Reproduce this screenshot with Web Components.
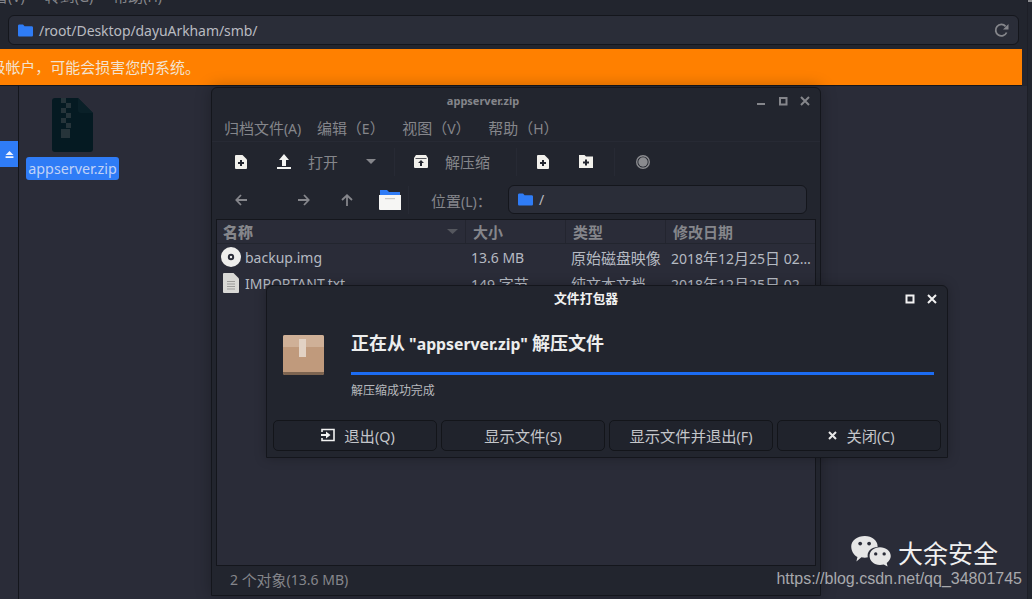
<!DOCTYPE html>
<html lang="zh">
<head>
<meta charset="utf-8">
<title>appserver.zip</title>
<style>
  html, body { margin: 0; height: 100%; overflow: hidden; background: #2a2c38; }
  body { font: 14px "Noto Sans", "Noto Sans CJK SC", sans-serif; color: #b8bac0; }
</style>
</head>
<body>
<file-manager></file-manager>
<archive-window></archive-window>
<extract-dialog></extract-dialog>
<blog-mark></blog-mark>

<script>
const ICONS = {
  folder: `<svg width="15" height="13" viewBox="0 0 16 13"><path fill="#2f7cf6" d="M0 1.500C0 .7.6 0 1.400 0h4l1.600 2h7.600c.8 0 1.400.6 1.400 1.400v8.200c0 .8-.6 1.400-1.400 1.400H1.400C.6 13 0 12.400 0 11.600z"/></svg>`,
  newFile: `<svg width="12" height="14" viewBox="0 0 12 14"><path fill="#f2f1ec" d="M1 0h6.500L12 4.500V13a1 1 0 0 1-1 1H1a1 1 0 0 1-1-1V1a1 1 0 0 1 1-1z"/><path fill="#22252e" d="M5 5h2v2h2v2H7v2H5V9H3V7h2z"/></svg>`,
  newFolder: `<svg width="14" height="13" viewBox="0 0 14 13"><path fill="#f2f1ec" d="M0 0h5.500l1.500 1.500h7V13H0z"/><path fill="#22252e" d="M6 4.500h2v2h2v2H8v2H6v-2H4v-2h2z"/></svg>`,
  upload: `<svg width="14" height="15" viewBox="0 0 14 15"><path fill="#f4f4f2" d="M7 0l5 6H9v6H5V6H2zM0 13h14v2H0z"/></svg>`,
  extract: `<svg width="14" height="13" viewBox="0 0 14 13"><path fill="#f2f1ec" d="M2 0h10l2 3v9a1 1 0 0 1-1 1H1a1 1 0 0 1-1-1V3z"/><path fill="#22252e" d="M1.500 3h11v.800h-11zM7 5l3 3H8v3H6V8H4z"/></svg>`,
  stop: `<svg width="14" height="14" viewBox="0 0 14 14"><circle cx="7" cy="7" r="6.300" fill="none" stroke="#8a8b8f" stroke-width="1.400"/><circle cx="7" cy="7" r="4.700" fill="#8a8b8f"/></svg>`,
  caret: `<svg width="10" height="5" viewBox="0 0 10 5"><path fill="#85868b" d="M0 0h10L5 5z"/></svg>`,
  caretDim: `<svg width="11" height="5" viewBox="0 0 11 5"><path fill="#55575e" d="M0 0h11L5.500 5z"/></svg>`,
  back: `<svg width="12" height="12" viewBox="0 0 12 12"><path fill="none" stroke="#85868b" stroke-width="1.800" d="M6 1L1.300 6 6 11M1.500 6H12"/></svg>`,
  forward: `<svg width="12" height="12" viewBox="0 0 12 12"><path fill="none" stroke="#85868b" stroke-width="1.800" d="M6 1l4.700 5L6 11M10.500 6H0"/></svg>`,
  up: `<svg width="12" height="12" viewBox="0 0 12 12"><path fill="none" stroke="#85868b" stroke-width="1.800" d="M1 6l5-4.700L11 6M6 1.500V12"/></svg>`,
  openFolder: `<svg width="22" height="20" viewBox="0 0 22 20"><path fill="#2f7cf6" d="M1 0h7l2 2h11v6H1z"/><path fill="#f6f6f4" d="M0 5h22v15H1a1 1 0 0 1-1-1z"/><path fill="#c8c8c6" d="M6 8h10v1.200H6z"/></svg>`,
  disc: `<svg width="20" height="20" viewBox="0 0 20 20"><circle cx="10" cy="10" r="10" fill="#eeeeec"/><circle cx="10" cy="10" r="3.200" fill="#2a2c38"/><circle cx="10" cy="10" r="1.200" fill="#eeeeec"/></svg>`,
  text: `<svg width="16" height="20" viewBox="0 0 16 20"><path fill="#d9d9d6" d="M1 0h9.500L16 5.500V19a1 1 0 0 1-1 1H1a1 1 0 0 1-1-1V1a1 1 0 0 1 1-1z"/><path fill="#9c9c9a" d="M4 8h8v1H4zM4 10.500h8v1H4zM4 13h8v1H4zM4 15.500h8v1H4z"/></svg>`,
  exit: `<svg width="15" height="14" viewBox="0 0 15 14"><path fill="none" stroke="#f2f2f2" stroke-width="1.600" d="M2 4V1.500h12v11H2V10"/><path fill="#f2f2f2" d="M1 6h5V3.500L10.500 7 6 10.500V8H1z"/></svg>`,
  close: `<svg width="9" height="9" viewBox="0 0 9 9"><path fill="none" stroke="#e8e8e8" stroke-width="2" d="M1 1l7 7M8 1L1 8"/></svg>`,
  reload: `<svg width="15" height="15" viewBox="0 0 15 15"><path fill="none" stroke="#85868b" stroke-width="1.800" d="M12.600 9.500A5.700 5.700 0 1 1 11.600 3.300"/><path fill="#85868b" d="M14.500 1v5.500H9z"/></svg>`,
  eject: `<svg width="9" height="7" viewBox="0 0 10 8"><path fill="#eef3ff" d="M5 0l4.500 4.500h-9zM.500 6h9v2h-9z"/></svg>`,
  zip: `<svg width="41" height="54" viewBox="0 0 41 54"><path fill="#051a22" d="M3 0h23l15 15v36a3 3 0 0 1-3 3H3a3 3 0 0 1-3-3V3a3 3 0 0 1 3-3z"/><path fill="#0a2028" d="M26 0l15 15H29a3 3 0 0 1-3-3z"/><path fill="#26343a" d="M9 0h5v5H9zM14 5h5v5h-5zM9 10h5v5H9zM14 15h5v5h-5zM9 20h5v5H9zM14 25h5v5h-5zM9 31h9v9H9z"/></svg>`,
  box: `<svg width="41" height="40" viewBox="0 0 41 40"><rect width="41" height="40" rx="2" fill="#c09a7c"/><path fill="#cfb097" d="M2 0h37a2 2 0 0 1 2 2v10H0V2a2 2 0 0 1 2-2z"/><path fill="#7d6450" d="M0 37h41v1a2 2 0 0 1-2 2H2a2 2 0 0 1-2-2z"/><rect x="16" y="4" width="7" height="18" fill="#e2d2c4"/></svg>`,
  wechat: `<svg width="40" height="32" viewBox="0 0 42 34"><path fill="#e6e6e6" d="M14.500 0C22 0 28 4.700 28 10.800c0 .4 0 .7-.1 1-5.900.2-10.500 4-10.500 9 0 .7.100 1.300.3 1.900-1 .2-2 .3-3.200.3-1.300 0-2.500-.2-3.700-.5L5.500 27l1.100-4.600C2.700 20.300 0 16 0 11 0 4.800 6.500 0 14.500 0z"/><path fill="#e6e6e6" d="M30.500 12C36.800 12 42 16.200 42 21.300c0 3-1.800 5.500-4.300 7.300l.9 3.900-4-2.200c-1.300.3-2.700.5-4.100.5-6.300 0-11-4.200-11-9.500S24.200 12 30.500 12z"/><circle cx="9.500" cy="8" r="2" fill="#2a2c38"/><circle cx="19" cy="8" r="2" fill="#2a2c38"/><circle cx="26" cy="19" r="1.800" fill="#2a2c38"/><circle cx="35" cy="19" r="1.800" fill="#2a2c38"/></svg>`
}

// the reference sets its Chinese a little larger than its Latin text
function render(el, html) {
  el.attachShadow({ mode: 'open' }).innerHTML =
    '<style>.zh { font-size: 1.07em; }</style>' +
    html.replace(/[\u3000-\u9fff\uff00-\uffef]+/g, '<span class="zh">$&</span>')
}

customElements.define('app-icon', class extends HTMLElement {
  connectedCallback() {
    this.attachShadow({ mode: 'open' }).innerHTML = `
      <style>:host { display: inline-flex; align-items: center; justify-content: center; flex: none; } svg { display: block; }</style>
      ${ICONS[this.getAttribute('name')]}`
  }
})

customElements.define('file-manager', class extends HTMLElement {
  constructor() {
    super()
    render(this, `
      <style>
        :host { display: flex; flex-direction: column; position: absolute; inset: 0; background: #23252f; }
        .menu { height: 7px; overflow: hidden; background: #22252e; color: #85868b; }
        .menu div { display: flex; gap: 20px; margin-top: -14px; line-height: 20px; margin-left: -22px; }
        .tools { height: 42px; background: #22252e; padding: 8px 13px 4px 8px; box-sizing: border-box; }
        .path { height: 30px; box-sizing: border-box; display: flex; align-items: center; gap: 6px; padding: 0 9px; background: #2a2d38; border: 1px solid #14161c; border-radius: 6px; color: #b9bbc1; letter-spacing: -.07px; }
        .path span { flex: 1; }
        .warn { height: 37px; width: 1022px; box-sizing: border-box; padding-bottom: 2px; background: #ff8000; color: #f3e3d0; display: flex; align-items: center; border-bottom: 1px solid #14161c; }
        .warn div { width: 200px; display: flex; justify-content: flex-end; overflow: hidden; white-space: nowrap; }
        .body { flex: 1; display: flex; background: #2a2c38; }
        .side { width: 19px; box-sizing: border-box; border-right: 1px solid #14161c; padding-top: 55px; flex: none; }
        .eject { height: 26px; width: 18px; background: #2f7cf6; display: flex; align-items: center; justify-content: center; }
        .files { padding: 12px 0 0 7px; display: flex; flex-direction: column; align-items: center; width: 93px; }
        .label { margin-top: 5px; background: #2f7cf6; color: #c0d2f6; border-radius: 3px; padding: 0 2px; line-height: 23px; font-size: 14.3px; }
        .gutter { position: absolute; top: 0; right: 0; bottom: 0; width: 5px; box-sizing: border-box; border-left: 1px solid #1d1f27; background: #22252e; }
        .thumb { height: 2px; background: #8a8b8f; }
      </style>
      <div class="menu"><div><span>查看(V)</span><span>转到(G)</span><span>帮助(H)</span></div></div>
      <div class="tools"><div class="path"><app-icon name="folder"></app-icon><span>/root/Desktop/dayuArkham/smb/</span><app-icon name="reload"></app-icon></div></div>
      <div class="warn"><div>您正在使用超级帐户，可能会损害您的系统。</div></div>
      <div class="body">
        <div class="side"><div class="eject"><app-icon name="eject"></app-icon></div></div>
        <div class="files"><app-icon name="zip"></app-icon><div class="label">appserver.zip</div></div>
      </div>
      <div class="gutter"><div class="thumb"></div></div>`)
  }
})

customElements.define('archive-window', class extends HTMLElement {
  constructor() {
    super()
    render(this, `
      <style>
        :host { position: absolute; left: 211px; top: 87px; width: 610px; height: 509px; box-sizing: border-box; border: 1px solid #14161c; border-radius: 6px 6px 0 0; background: #22252e; display: flex; flex-direction: column; box-shadow: 0 0 16px rgba(0,0,0,.28); color: #85868b; }
        .title { height: 26px; flex: none; position: relative; text-align: center; font-size: 11px; font-weight: 700; line-height: 26px; padding-right: 66px; }
        .caps { position: absolute; top: 0; right: 10px; height: 100%; display: flex; align-items: center; gap: 12px; }
        .menu { height: 28px; flex: none; display: flex; align-items: center; gap: 17.700px; padding-left: 12px; border-bottom: 1px solid #272a34; box-sizing: border-box; }
        .menu > span:first-child { margin-right: -2px; }
        .bar { height: 39px; flex: none; display: flex; align-items: center; position: relative; }
        .bar > *, .loc > * { position: absolute; }
        .loc { height: 38px; flex: none; display: flex; align-items: center; position: relative; }
        .entry { left: 296px; top: 4px; width: 299px; height: 29px; box-sizing: border-box; border: 1px solid #14161c; border-radius: 6px; background: #2a2d38; display: flex; align-items: center; gap: 6px; padding: 0 9px; color: #b9bbc1; }
        .sep { width: 1px; height: 28px; background: #272a34; }
        .list { margin: 0 4px; height: 347px; flex: none; box-sizing: border-box; border: 1px solid #14161c; background: #2a2c38; }
        .row { display: grid; grid-template-columns: 249px 100px 100px 1fr; height: 26px; align-items: center; white-space: nowrap; color: #b5bac2; }
        .head { height: 23px; border-bottom: 1px solid #22252e; color: #85868b; font-weight: 700; }
        .head > span { height: 100%; display: flex; align-items: center; justify-content: space-between; box-sizing: border-box; padding-left: 7px; padding-right: 7px; border-right: 1px solid #23252f; }
        .head > span:first-child { padding-left: 6px; }
        .name { display: flex; align-items: center; gap: 4px; padding-left: 4px; }
        .name app-icon { width: 20px; }
        .cell { padding-left: 5px; overflow: hidden; text-overflow: ellipsis; }
        .date { padding-right: 4px; }
        .status { flex: 1; display: flex; align-items: center; white-space: pre; padding: 0 0 2px 18px; }
      </style>
      <div class="title">appserver.zip
        <div class="caps">
          <svg width="10" height="10" viewBox="0 0 10 10"><path fill="#85868b" d="M1 7h8v2H1z"/></svg>
          <svg width="10" height="10" viewBox="0 0 10 10"><path fill="none" stroke="#85868b" stroke-width="2" d="M2 2h6.500v6.500H2z"/></svg>
          <svg width="10" height="10" viewBox="0 0 10 10"><path fill="none" stroke="#85868b" stroke-width="2" d="M1 1l8 8M9 1L1 9"/></svg>
        </div>
      </div>
      <div class="menu"><span>归档文件(A)</span><span>编辑（E）</span><span>视图（V）</span><span>帮助（H）</span></div>
      <div class="bar">
        <app-icon name="newFile" style="left:23px"></app-icon>
        <app-icon name="upload" style="left:65px"></app-icon>
        <span style="left:96px">打开</span>
        <app-icon name="caret" style="left:154px"></app-icon>
        <i class="sep" style="left:182px"></i>
        <app-icon name="extract" style="left:202px"></app-icon>
        <span style="left:233px">解压缩</span>
        <i class="sep" style="left:304px"></i>
        <app-icon name="newFile" style="left:325px"></app-icon>
        <app-icon name="newFolder" style="left:367px"></app-icon>
        <i class="sep" style="left:402px"></i>
        <app-icon name="stop" style="left:424px"></app-icon>
      </div>
      <div class="loc">
        <app-icon name="back" style="left:23px"></app-icon>
        <app-icon name="forward" style="left:86px"></app-icon>
        <app-icon name="up" style="left:129px"></app-icon>
        <app-icon name="openFolder" style="left:167px"></app-icon>
        <i class="sep" style="left:196px"></i>
        <span style="left:219px">位置(L)：</span>
        <div class="entry"><app-icon name="folder"></app-icon><span>/</span></div>
      </div>
      <div class="list">
        <div class="row head"><span><b>名称</b><app-icon name="caretDim"></app-icon></span><span>大小</span><span>类型</span><span style="border:0">修改日期</span></div>
        <div class="row"><div class="name"><app-icon name="disc"></app-icon>backup.img</div><div class="cell">13.6 MB</div><div class="cell">原始磁盘映像</div><div class="cell date">2018年12月25日 02:14</div></div>
        <div class="row"><div class="name"><app-icon name="text"></app-icon>IMPORTANT.txt</div><div class="cell">149 字节</div><div class="cell">纯文本文档</div><div class="cell date">2018年12月25日 02:14</div></div>
      </div>
      <div class="status">2 个对象(13.6 MB)</div>`)
  }
})

customElements.define('dialog-button', class extends HTMLElement {
  constructor() {
    super()
    this.attachShadow({ mode: 'open' }).innerHTML = `
      <style>
        :host { display: flex; align-items: center; justify-content: center; gap: 9px; height: 31px; padding-bottom: 1px; box-sizing: border-box; border: 1px solid #13151a; border-radius: 5px; background: #20232c; color: #c4c6ca; font-size: 14.300px; white-space: nowrap; }
        :host([with-icon]) { padding-left: 5px; }
      </style>
      <slot name="icon"></slot><span><slot></slot></span>`
  }
})

customElements.define('extract-dialog', class extends HTMLElement {
  constructor() {
    super()
    render(this, `
      <style>
        :host { position: absolute; left: 266px; top: 285px; width: 682px; height: 173px; box-sizing: border-box; border: 1px solid #14161c; border-radius: 6px 6px 0 0; background: #22252e; display: flex; flex-direction: column; box-shadow: 0 0 12px rgba(0,0,0,.25); }
        .title { height: 26px; flex: none; position: relative; line-height: 25px; font-size: 12px; font-weight: 700; color: #f2f2f2; padding-left: 287px; }
        .caps { position: absolute; top: 0; right: 10px; height: 100%; display: flex; align-items: center; gap: 12px; }
        .main { display: flex; align-items: flex-start; padding: 19px 13px 0 16px; gap: 27px; height: 108px; box-sizing: border-box; flex: none; }
        .main > app-icon { margin-top: 4px; }
        .text { flex: 1; display: flex; flex-direction: column; }
        h1 { margin: 0; height: 24px; font-size: 15.800px; font-weight: 700; line-height: 24px; color: #eceded; }
        h1 .zh { font-size: 1.14em; }
        .progress { height: 3px; background: #1c6cf2; margin-top: 17px; }
        .note { margin-top: 7px; height: 18px; font-size: 11.200px; line-height: 18px; color: #b7b9bd; }
        .buttons { display: grid; grid-template-columns: repeat(4, 164px); gap: 4px; padding-left: 6px; }
      </style>
      <div class="title">文件打包器
        <div class="caps">
          <svg width="10" height="10" viewBox="0 0 10 10"><path fill="none" stroke="#f2f2f2" stroke-width="2" d="M1.500 1.500h7v7h-7z"/></svg>
          <svg width="10" height="10" viewBox="0 0 10 10"><path fill="none" stroke="#f2f2f2" stroke-width="2" d="M1 1l8 8M9 1L1 9"/></svg>
        </div>
      </div>
      <div class="main">
        <app-icon name="box"></app-icon>
        <div class="text">
          <h1>正在从 "appserver.zip" 解压文件</h1>
          <div class="progress"></div>
          <div class="note">解压缩成功完成</div>
        </div>
      </div>
      <div class="buttons">
        <dialog-button with-icon><app-icon slot="icon" name="exit"></app-icon>退出(Q)</dialog-button>
        <dialog-button>显示文件(S)</dialog-button>
        <dialog-button>显示文件并退出(F)</dialog-button>
        <dialog-button with-icon><app-icon slot="icon" name="close"></app-icon>关闭(C)</dialog-button>
      </div>`)
  }
})

customElements.define('blog-mark', class extends HTMLElement {
  constructor() {
    super()
    this.attachShadow({ mode: 'open' }).innerHTML = `
      <style>
        :host { position: absolute; right: 10px; bottom: 10px; display: flex; flex-direction: column; align-items: flex-end; }
        .brand { display: flex; align-items: center; gap: 7px; margin-right: 24px; font: 25px "Noto Sans CJK SC", sans-serif; line-height: 34px; color: #f0f0f0; }
        .url { font: 16px "Liberation Sans", sans-serif; line-height: 20px; color: #a8a9ad; }
      </style>
      <div class="brand"><app-icon name="wechat"></app-icon>大余安全</div>
      <div class="url">https://blog.csdn.net/qq_34801745</div>`
  }
})
</script>
</body>
</html>
